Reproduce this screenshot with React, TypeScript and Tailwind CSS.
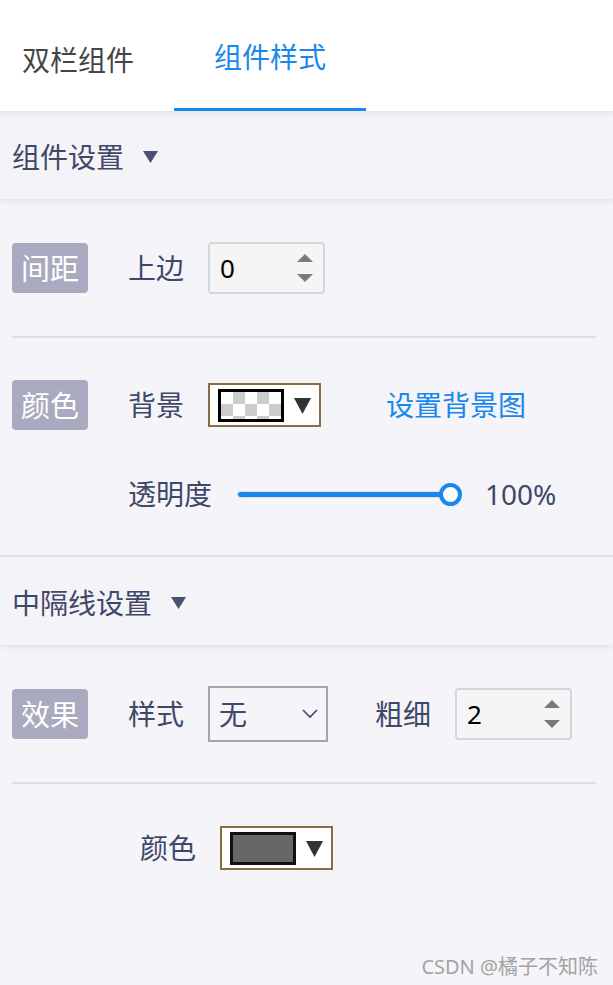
import type { ReactNode } from 'react'

const FONT = "font-['Noto_Sans','Noto_Sans_CJK_SC',sans-serif]"

function Badge({ children }: { children: ReactNode }) {
  return (
    <div className="flex h-[50px] w-[76px] shrink-0 items-center justify-center rounded-[4px] bg-[#a9aabf] text-[29px] leading-none text-white">
      {children}
    </div>
  )
}

function Label({ children, className = '' }: { children: ReactNode; className?: string }) {
  return <div className={`text-[28px] leading-none text-[#3f4868] ${className}`}>{children}</div>
}

function NumberInput({ value }: { value: string }) {
  return (
    <div className="flex h-[52px] w-[117px] items-center justify-between rounded-[4px] border-2 border-[#cfd8dd] bg-[#f5f5f5] pl-[10px] pr-[10px]">
      <span className="text-[26px] leading-none text-black">{value}</span>
      <div className="flex flex-col gap-[12px]">
        <svg width="16" height="8" viewBox="0 0 16 8"><path d="M8 0L16 8H0z" fill="#7a7a7a" /></svg>
        <svg width="16" height="8" viewBox="0 0 16 8"><path d="M0 0H16L8 8z" fill="#7a7a7a" /></svg>
      </div>
    </div>
  )
}

function ColorPicker({ swatch }: { swatch: 'checker' | string }) {
  return (
    <div className="flex h-[44px] w-[113px] items-center border-2 border-[#8a6a47] bg-white pl-[8px]">
      {swatch === 'checker' ? (
        <div className="h-[33px] w-[66px] border-[3px] border-black bg-white bg-[conic-gradient(#cccccc_25%,#ffffff_0_50%,#cccccc_0_75%,#ffffff_0)] bg-[length:24px_24px]" />
      ) : (
        <div className="h-[33px] w-[66px] border-[3px] border-[#111] bg-[#676767]" />
      )}
      <svg className="ml-[10px]" width="17" height="17" viewBox="0 0 16 16"><path d="M0 1H16L8 16z" fill="#333" /></svg>
    </div>
  )
}

function SectionHeader({ title }: { title: string }) {
  return (
    <div className="relative z-10 flex h-[88px] items-center gap-[19px] bg-[#f3f3f8] pl-[12px] pt-[3px] shadow-[0_3px_6px_rgba(0,0,0,0.07)]">
      <span className="text-[28px] leading-none text-[#3f4868]">{title}</span>
      <svg width="15" height="12" viewBox="0 0 15 12"><path d="M0 0H15L7.5 12z" fill="#4a5070" /></svg>
    </div>
  )
}

export default function App() {
  return (
    <div className={`relative h-[985px] w-[613px] overflow-hidden bg-[#f4f4f9] ${FONT}`}>
      {/* tabs */}
      <div className="relative z-20 flex h-[111px] items-stretch bg-white shadow-[0_3px_6px_rgba(0,0,0,0.07)]">
        <div className="flex items-center pl-[22px] pr-[40px] pt-[8px] text-[28px] leading-none text-[#454545]">双栏组件</div>
        <div className="flex items-center border-b-[3px] border-[#1a87ec] px-[40px] pt-[5px] text-[28px] leading-none text-[#1a87ec]">组件样式</div>
      </div>

      <SectionHeader title="组件设置" />

      <div className="px-[12px] pt-[44px]">
        <div className="flex h-[50px] items-center">
          <Badge>间距</Badge>
          <Label className="ml-[40px] w-[80px]">上边</Label>
          <NumberInput value="0" />
        </div>
        <div className="mt-[43px] h-[2px] w-[584px] bg-[#dcdce8]" />
        <div className="mt-[42px] flex h-[50px] items-center">
          <Badge>颜色</Badge>
          <Label className="ml-[40px] w-[80px]">背景</Label>
          <ColorPicker swatch="checker" />
          <span className="ml-[65px] text-[28px] leading-none text-[#1a87ec]">设置背景图</span>
        </div>
        <div className="mt-[39px] flex h-[50px] items-center pl-[116px]">
          <Label className="w-[109px]">透明度</Label>
          <div className="relative flex h-[24px] w-[226px] items-center">
            <div className="h-[7px] w-[215px] rounded-full border border-[#dfe3ee] bg-[#1a87ec]" />
            <div className="absolute left-[202px] top-[1px] h-[23px] w-[23px] rounded-full border-[4px] border-[#1a87ec] bg-white" />
          </div>
          <span className="ml-[22px] text-[28px] leading-none text-[#3f4868]">100%</span>
        </div>
      </div>

      <div className="mt-[36px] h-[2px] bg-[#e4e4ea]" />

      <SectionHeader title="中隔线设置" />

      <div className="px-[12px] pt-[41px]">
        <div className="flex h-[56px] items-center">
          <Badge>效果</Badge>
          <Label className="ml-[40px] w-[80px]">样式</Label>
          <div className="flex h-[56px] w-[120px] items-center justify-between border-2 border-[#a6a6a6] pl-[9px] pr-[8px]">
            <span className="text-[28px] leading-none text-[#3f4868]">无</span>
            <svg width="16" height="10" viewBox="0 0 16 10"><path d="M1 1L8 8L15 1" fill="none" stroke="#3f4868" strokeWidth="1.6" /></svg>
          </div>
          <Label className="ml-[47px] w-[80px]">粗细</Label>
          <NumberInput value="2" />
        </div>
        <div className="mt-[40px] h-[2px] w-[584px] bg-[#dcdce8]" />
        <div className="mt-[42px] flex h-[44px] items-center pl-[128px]">
          <Label className="w-[80px]">颜色</Label>
          <ColorPicker swatch="#676767" />
        </div>
      </div>

      <div className="absolute bottom-[8px] right-[15px] text-[20px] leading-none text-[#a3a3a3]">CSDN @橘子不知陈</div>
    </div>
  )
}
